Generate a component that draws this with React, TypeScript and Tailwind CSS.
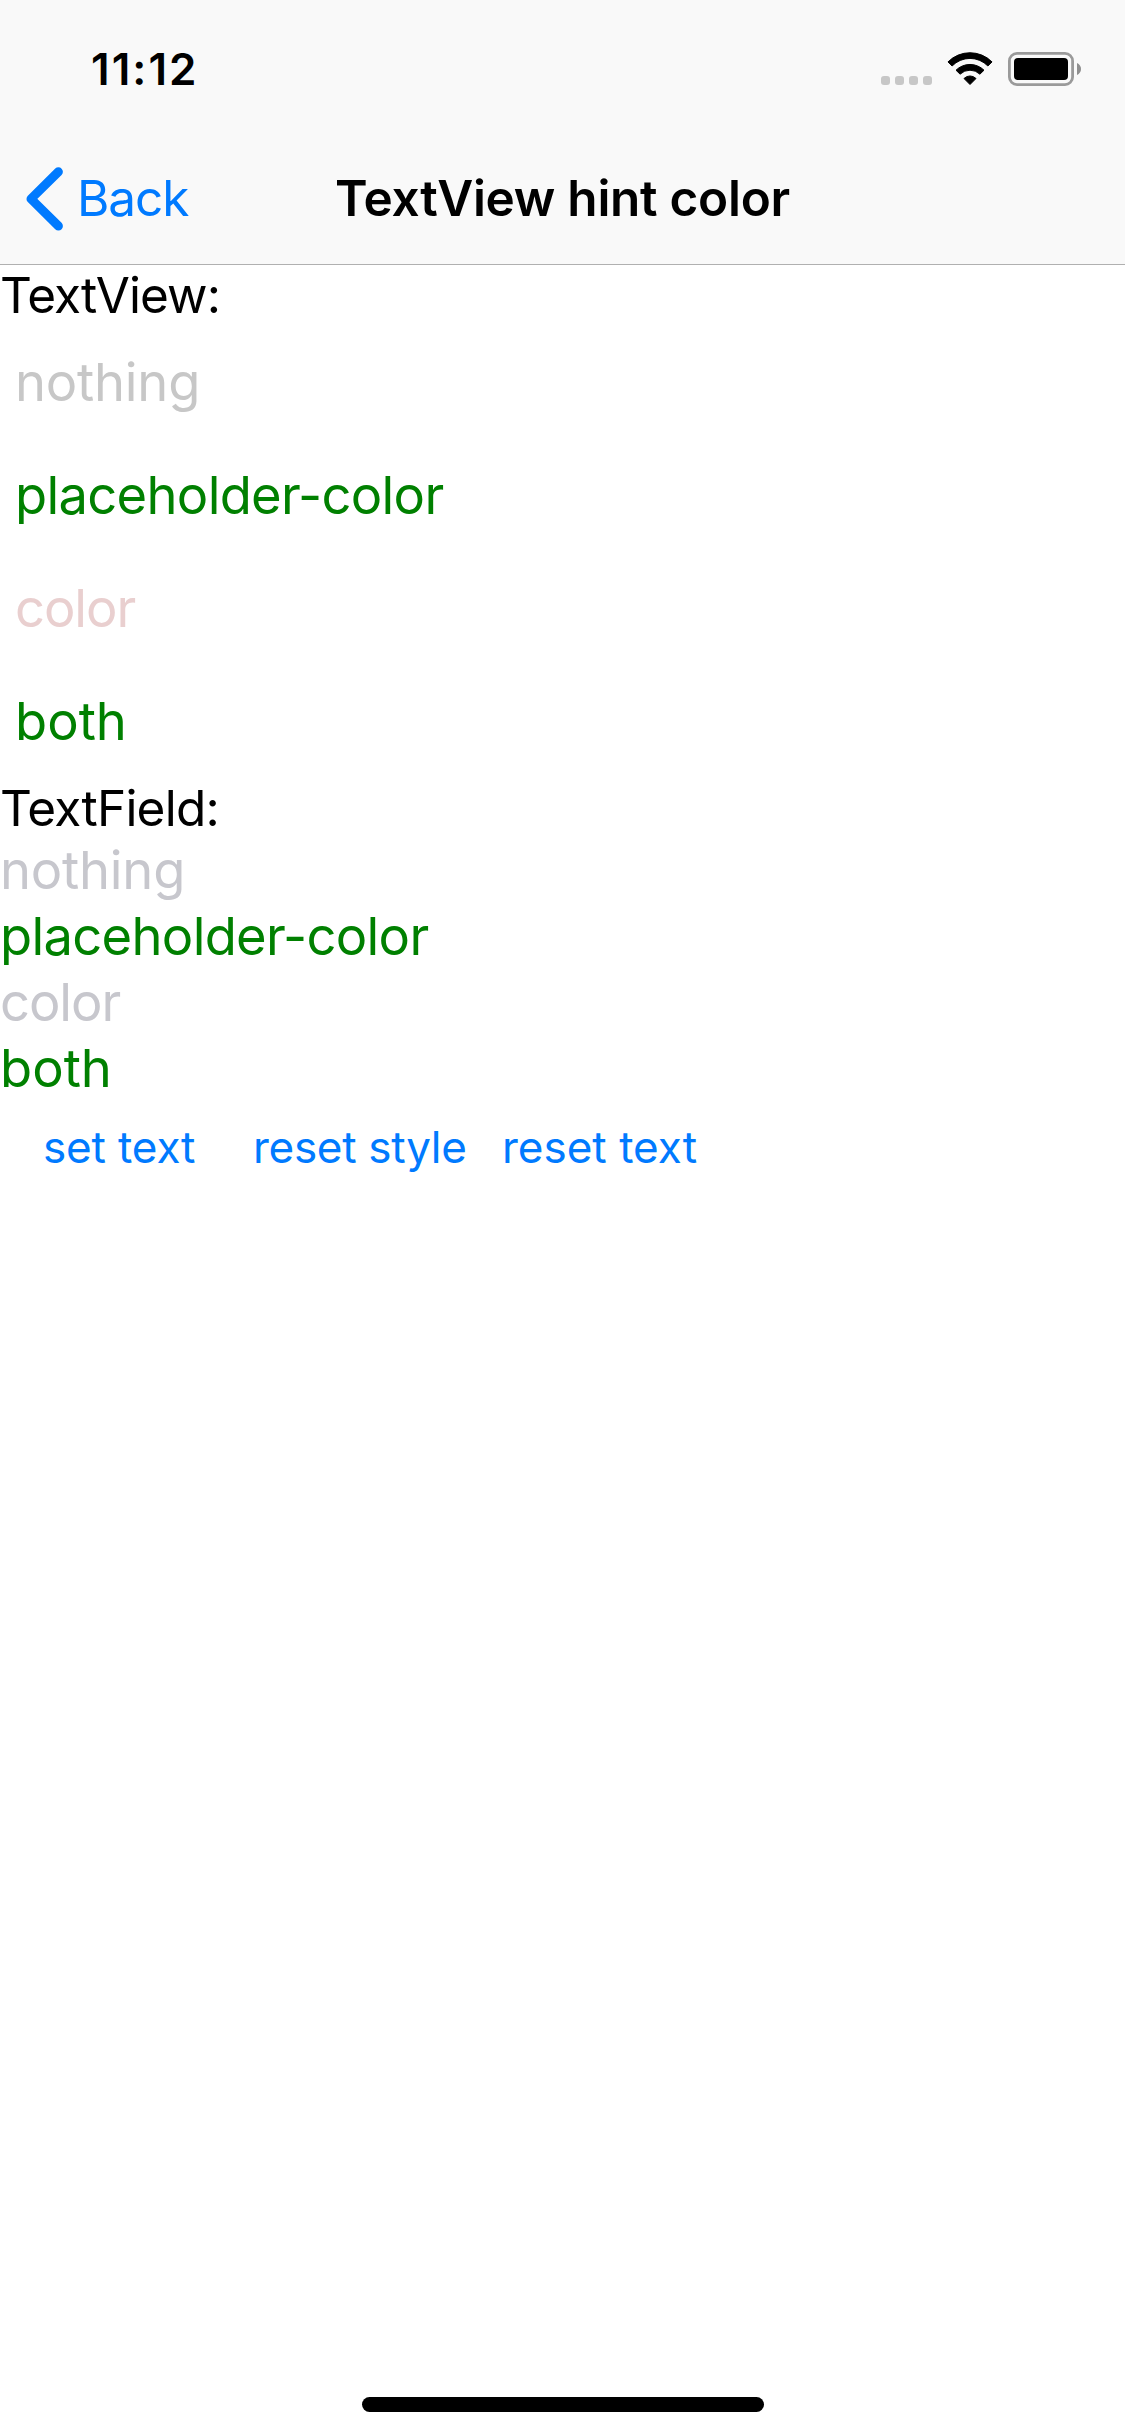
const textViews = [
  { label: "nothing", style: "text-[#c7c7c7] tracking-[-0.22px]" },
  { label: "placeholder-color", style: "text-[#008000] tracking-[-0.69px]" },
  { label: "color", style: "text-[#e9cfcf] tracking-[-1.05px]" },
  { label: "both", style: "text-[#008000]" },
];

const textFields = [
  { label: "nothing", style: "text-[#c7c7cd] tracking-[-0.22px]" },
  { label: "placeholder-color", style: "text-[#008000] tracking-[-0.69px]" },
  { label: "color", style: "text-[#c7c7cd] tracking-[-1.05px]" },
  { label: "both", style: "text-[#008000]" },
];

function StatusIcons() {
  return (
    <svg className="mt-[48px] block h-[42px] w-[204px]" viewBox="878 48 204 42" fill="none">
      <g fill="#c7c7c7">
        <rect x="881" y="76" width="9" height="9" rx="3" />
        <rect x="895" y="76" width="9" height="9" rx="3" />
        <rect x="909" y="76" width="9" height="9" rx="3" />
        <rect x="923" y="76" width="9" height="9" rx="3" />
      </g>
      <g fill="#000" stroke="#000" strokeWidth="1" strokeLinejoin="round">
        <path d="M948 61.9 A31 31 0 0 1 992 61.9 L987.9 66 A24.9 24.9 0 0 0 952.1 66 Z" />
        <path d="M956 70.2 A19.9 19.9 0 0 1 984 70.2 L979.9 74.2 A14.2 14.2 0 0 0 960.1 74.2 Z" />
        <path d="M964 78.5 A8.4 8.4 0 0 1 976 78.5 L970 84.5 Z" />
      </g>
      <rect x="1009.4" y="53.4" width="63.2" height="31.2" rx="7.6" stroke="#9a9a9a" strokeWidth="2.8" />
      <rect x="1014" y="58" width="54" height="22" rx="4" fill="#000" />
      <path d="M1077 63 C1079.5 64 1081 66.4 1081 69 C1081 71.6 1079.5 74 1077 75 Z" fill="#8f8f8f" />
    </svg>
  );
}

export default function App() {
  return (
    <div className="flex h-[2436px] w-[1125px] flex-col overflow-hidden whitespace-nowrap bg-white font-['Inter',sans-serif] text-black">
      <header className="h-[265px] border-b border-[#b0b0b0] bg-[#f9f9f9]">
        <div className="flex h-[132px] justify-between pl-[91px] pr-[43px]">
          <span className="pt-[42px] text-[44px] font-semibold leading-[54px] tracking-[2.05px]">11:12</span>
          <StatusIcons />
        </div>
        <nav className="grid h-[132px] grid-cols-[1fr_auto_1fr] pt-[36px] text-[49.5px] leading-[60px]">
          <button className="flex items-start pl-[24px] text-[#007aff]">
            <svg className="-mt-[2.5px] mr-[11px] block h-[66px] w-[42px]" viewBox="24 165.5 42 66" fill="none">
              <path
                d="M58.4 171.3 L31 198.4 L58.4 225.5"
                stroke="#007aff"
                strokeWidth="9"
                strokeLinecap="round"
                strokeLinejoin="round"
              />
            </svg>
            <span className="tracking-[-1.1px]">Back</span>
          </button>
          <h1 className="font-semibold tracking-[-0.26px]">TextView hint color</h1>
        </nav>
      </header>

      <main className="flex-1">
        <h2 className="h-[60px] text-[49.5px] leading-[60px] tracking-[-0.94px]">TextView:</h2>
        {textViews.map((t) => (
          <div key={t.label} className="h-[113px] pl-[15px] pt-[25px] text-[52.5px] leading-[64px]">
            <span className={t.style}>{t.label}</span>
          </div>
        ))}
        <h2 className="h-[60px] text-[49.5px] leading-[62px] tracking-[-0.77px]">TextField:</h2>
        {textFields.map((t) => (
          <div key={t.label} className="h-[66px] pt-px text-[52.5px] leading-[64px]">
            <span className={t.style}>{t.label}</span>
          </div>
        ))}
        <div className="flex pl-[43px] pt-[19px] text-[44px] leading-[54px] text-[#007aff]">
          <button className="w-[210px] text-left tracking-[-0.15px]">set text</button>
          <button className="w-[249px] text-left tracking-[-0.3px]">reset style</button>
          <button className="text-left">reset text</button>
        </div>
      </main>

      <footer className="flex justify-center pb-6">
        <div className="h-[15px] w-[402px] rounded-full bg-black" />
      </footer>
    </div>
  );
}
